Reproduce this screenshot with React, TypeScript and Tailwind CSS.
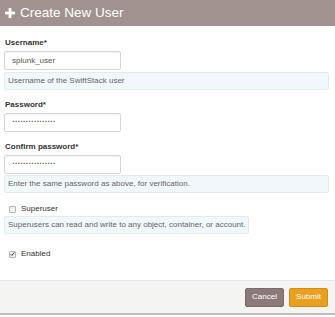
import React from "react";

function Help({ children, fit }: { children: React.ReactNode; fit?: boolean }) {
  return (
    <div
      className={
        "h-[18px] flex items-center px-[3px] rounded-[2px] border border-[#dfebf1] bg-[#f1f8fb] text-[8px] text-[#666] " +
        (fit ? "self-start" : "mr-[6px]")
      }
    >
      {children}
    </div>
  );
}

function Label({ children, className }: { children: React.ReactNode; className?: string }) {
  return (
    <div className={"h-[12px] flex items-center text-[8px] font-bold text-[#333] " + (className || "")}>
      {children}
    </div>
  );
}

function Input({ value, password }: { value: string; password?: boolean }) {
  return (
    <div className="w-[117px] h-[19px] flex items-center px-[7px] rounded-[2px] border border-[#d6d6d6] bg-white shadow-[inset_0_1px_1px_rgba(0,0,0,0.05)]">
      {password ? (
        <span className="text-[4.6px] text-[#555] leading-none font-['DejaVu_Sans',sans-serif]">{value}</span>
      ) : (
        <span className="text-[8px] text-[#555]">{value}</span>
      )}
    </div>
  );
}

function Check({ checked }: { checked?: boolean }) {
  return (
    <span className="w-[7px] h-[7px] rounded-[1px] border border-[#b5b5b5] bg-[#f3f3f3] flex items-center justify-center">
      {checked && (
        <svg width="6" height="6" viewBox="0 0 6 6">
          <path d="M0.8 3.2 L2.3 4.7 L5.2 1.2" stroke="#333" strokeWidth="1.2" fill="none" />
        </svg>
      )}
    </span>
  );
}

export default function App() {
  const dots = "••••••••••••••••";
  return (
    <div className="w-[335px] h-[317px] flex flex-col bg-white font-['Liberation_Sans',Arial,sans-serif]">
      <div className="h-[26px] shrink-0 bg-[#a1928f] flex items-center pl-[5px] gap-[5px] text-white">
        <svg width="10" height="10" viewBox="0 0 10 10">
          <rect x="3.6" y="0" width="2.8" height="10" fill="white" />
          <rect x="0" y="3.6" width="10" height="2.8" fill="white" />
        </svg>
        <span className="text-[13.5px] leading-none">Create New User</span>
      </div>
      <div className="flex flex-col pl-[4px] pt-[11px]">
        <Label className="pl-[1px]">Username*</Label>
        <div className="mt-[2px]">
          <Input value="splunk_user" />
        </div>
        <div className="mt-[2px] flex flex-col">
          <Help>Username of the SwiftStack user</Help>
        </div>
        <Label className="mt-[9px] pl-[1px]">Password*</Label>
        <div className="mt-[2px]">
          <Input value={dots} password />
        </div>
        <Label className="mt-[9px] pl-[1px]">Confirm password*</Label>
        <div className="mt-[2px]">
          <Input value={dots} password />
        </div>
        <div className="mt-[1px] flex flex-col">
          <Help>Enter the same password as above, for verification.</Help>
        </div>
        <div className="mt-[10px] h-[12px] flex items-center pl-[5px] gap-[5px]">
          <Check />
          <span className="text-[8px] text-[#333]">Superuser</span>
        </div>
        <div className="mt-[1px] flex flex-col">
          <Help fit>Superusers can read and write to any object, container, or account.</Help>
        </div>
        <div className="mt-[14px] h-[12px] flex items-center pl-[5px] gap-[5px]">
          <Check checked />
          <span className="text-[8px] text-[#333]">Enabled</span>
        </div>
      </div>
      <div className="mt-auto mb-[2px] h-[35px] bg-[#f4f4f3] border-t border-[#e6e6e6] border-b-2 border-b-[#bdbdbd] flex items-center justify-end pr-[7px] gap-[5px]">
        <button className="w-[39px] h-[19px] rounded-[2px] bg-[#8b7a79] border border-[#7a6a69] text-white text-[8px]">
          Cancel
        </button>
        <button className="w-[39px] h-[19px] rounded-[2px] bg-[#e9a01f] border border-[#d38d12] text-white text-[8px]">
          Submit
        </button>
      </div>
    </div>
  );
}
